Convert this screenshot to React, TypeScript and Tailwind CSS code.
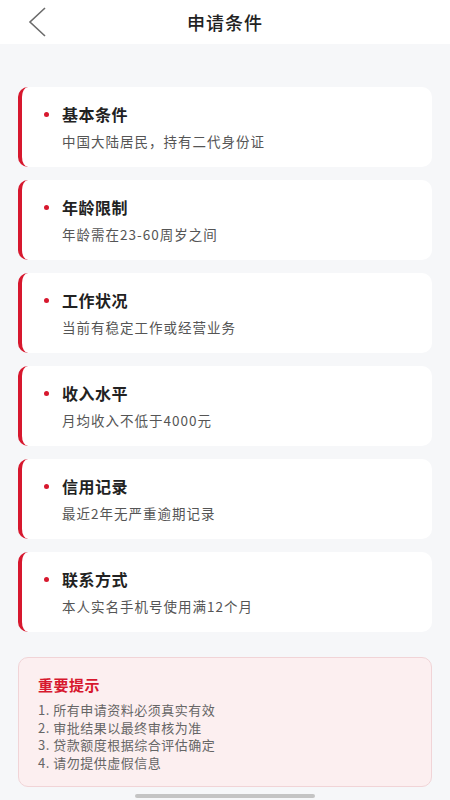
import React from 'react';

const items = [
  { title: '基本条件', desc: '中国大陆居民，持有二代身份证' },
  { title: '年龄限制', desc: '年龄需在23-60周岁之间' },
  { title: '工作状况', desc: '当前有稳定工作或经营业务' },
  { title: '收入水平', desc: '月均收入不低于4000元' },
  { title: '信用记录', desc: '最近2年无严重逾期记录' },
  { title: '联系方式', desc: '本人实名手机号使用满12个月' },
];

const tips = [
  '1. 所有申请资料必须真实有效',
  '2. 审批结果以最终审核为准',
  '3. 贷款额度根据综合评估确定',
  '4. 请勿提供虚假信息',
];

const BackIcon = () => (
  <svg width="22" height="32" viewBox="0 0 22 32" fill="none" stroke="#6b6b6b" strokeWidth={1.6}>
    <path d="M19 2L4 16l15 14" />
  </svg>
);

export default function App() {
  return (
    <div
      className="relative h-[800px] w-[450px] overflow-hidden bg-[#f6f7f9]"
      style={{ fontFamily: '"Noto Sans CJK SC", "Noto Sans", sans-serif' }}
    >
      <header className="relative flex h-[44px] items-center justify-center bg-white">
        <button type="button" className="absolute left-[26px] top-[6px]">
          <BackIcon />
        </button>
        <h1 className="text-[18px] font-medium tracking-[1px] text-[#222]">申请条件</h1>
      </header>

      <main className="flex flex-col gap-[13px] px-[18px] pt-[43px]">
        {items.map((it) => (
          <div
            key={it.title}
            className="flex h-[80px] flex-col justify-center rounded-[10px] border-l-[4px] border-[#d7182e] bg-white pl-[22px]"
          >
            <div className="flex items-center">
              <span className="mr-[13px] h-[5px] w-[5px] rounded-full bg-[#d7182e]" />
              <span className="text-[16px] font-bold leading-[20px] tracking-[0.5px] text-[#222]">{it.title}</span>
            </div>
            <p className="mt-[8px] pl-[18px] text-[13.5px] leading-[18px] tracking-[1px] text-[#555]">{it.desc}</p>
          </div>
        ))}

        <div className="mt-[12px] rounded-[10px] border border-[#f1d4d7] bg-[#fceff0] px-[19px] pb-[15px] pt-[17px]">
          <h2 className="text-[15px] font-bold leading-[20px] tracking-[0.5px] text-[#d7182e]">重要提示</h2>
          <ul className="mt-[6px] text-[13px] leading-[17.5px] tracking-[0.5px] text-[#666]">
            {tips.map((t) => (
              <li key={t}>{t}</li>
            ))}
          </ul>
        </div>
      </main>

      <div className="absolute bottom-[2px] left-[135px] h-[4px] w-[180px] rounded-full bg-[#c4c4c4]" />
    </div>
  );
}
